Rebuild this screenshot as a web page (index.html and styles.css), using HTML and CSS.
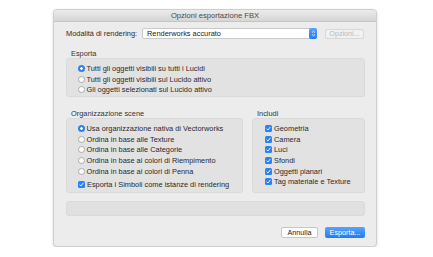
FILE: index.html
```html
<!DOCTYPE html>
<html lang="it">
<head>
  <meta charset="UTF-8" />
  <title>Opzioni esportazione FBX</title>
  <link rel="stylesheet" href="styles.css">
</head>
<body>
  <div class="window">
    <div class="titlebar">Opzioni esportazione FBX</div>
    <div class="content">
      <div class="mode-row">
        <span class="mode-label">Modalità di rendering:</span>
        <div class="popup">
          <span>Renderworks accurato</span>
          <span class="stepper">
            <svg width="5" height="7" viewBox="0 0 5 7"><path d="M1 2.6 L2.5 1.2 L4 2.6 M1 4.4 L2.5 5.8 L4 4.4" fill="none" stroke="#fff" stroke-width="0.8"/></svg>
          </span>
        </div>
        <button class="btn btn-disabled">Opzioni...</button>
      </div>

      <div class="group-title">Esporta</div>
      <div class="box box-export">
        <label class="opt"><span class="radio on"></span>Tutti gli oggetti visibili su tutti i Lucidi</label>
        <label class="opt"><span class="radio"></span>Tutti gli oggetti visibili sul Lucido attivo</label>
        <label class="opt"><span class="radio"></span>Gli oggetti selezionati sul Lucido attivo</label>
      </div>

      <div class="two-cols">
        <div class="col-scene">
          <div class="group-title">Organizzazione scene</div>
          <div class="box box-tall">
            <label class="opt"><span class="radio on"></span>Usa organizzazione nativa di Vectorworks</label>
            <label class="opt"><span class="radio"></span>Ordina in base alle Texture</label>
            <label class="opt"><span class="radio"></span>Ordina in base alle Categorie</label>
            <label class="opt"><span class="radio"></span>Ordina in base ai colori di Riempimento</label>
            <label class="opt"><span class="radio"></span>Ordina in base ai colori di Penna</label>
            <label class="opt opt-gap"><span class="check"></span>Esporta i Simboli come istanze di rendering</label>
          </div>
        </div>
        <div class="col-include">
          <div class="group-title">Includi</div>
          <div class="box box-tall">
            <label class="opt"><span class="check"></span>Geometria</label>
            <label class="opt"><span class="check"></span>Camera</label>
            <label class="opt"><span class="check"></span>Luci</label>
            <label class="opt"><span class="check"></span>Sfondi</label>
            <label class="opt"><span class="check"></span>Oggetti planari</label>
            <label class="opt"><span class="check"></span>Tag materiale e Texture</label>
          </div>
        </div>
      </div>

      <div class="box box-empty"></div>

      <div class="actions">
        <button class="btn">Annulla</button>
        <button class="btn btn-primary">Esporta...</button>
      </div>
    </div>
  </div>
</body>
</html>
```

FILE: styles.css
```css
body {
  margin: 0;
  background: #fff;
  font-family: 'Liberation Sans', Arial, sans-serif;
  font-size: 7.4px;
  color: #2a2a2a;
}
.window {
  margin: 9px 0 0 53px;
  width: 322px;
  height: 236px;
  background: #ececec;
  border: 1px solid #cfcfcf;
  border-radius: 4px;
  box-shadow: 0 1px 3px rgba(0,0,0,0.15);
  overflow: hidden;
}
.titlebar {
  height: 11px;
  line-height: 11px;
  text-align: center;
  font-size: 7.6px;
  color: #4a4a4a;
  background: linear-gradient(#ebebeb, #d6d6d6);
  border-bottom: 1px solid #c4c4c4;
}
.content {
  padding: 6px 11px 0 12px;
}
.mode-row {
  display: flex;
  align-items: center;
  height: 11px;
}
.mode-label {
  width: 76px;
}
.popup {
  width: 175px;
  height: 11px;
  box-sizing: border-box;
  background: #fff;
  border: 1px solid #c9c9c9;
  border-radius: 2px;
  display: flex;
  align-items: center;
  justify-content: space-between;
  padding-left: 4px;
  color: #222;
}
.stepper {
  width: 8px;
  height: 11px;
  margin: -1px -1px -1px 0;
  background: linear-gradient(#5aa3fb, #1f7cf5);
  border-radius: 2px;
  display: flex;
  align-items: center;
  justify-content: center;
}
.btn {
  font-family: inherit;
  font-size: 7.2px;
  height: 10px;
  padding: 0 3px;
  line-height: 8px;
  background: #fff;
  border: 1px solid #c6c6c6;
  border-radius: 2px;
  color: #222;
  box-sizing: border-box;
}
.btn-disabled {
  margin-left: 8px;
  width: 39px;
  color: #b8b8b8;
  background: #f1f1f1;
  border-color: #d8d8d8;
}
.group-title {
  margin: 11px 0 0 5px;
  height: 7px;
  line-height: 7px;
  color: #333;
}
.box {
  background: #e2e2e2;
  border: 1px solid #dadada;
  border-radius: 3px;
  box-sizing: border-box;
}
.box-export {
  margin-top: 1px;
  height: 39px;
  padding: 4px 0 0 11px;
}
.opt {
  display: flex;
  align-items: center;
  height: 10.7px;
  white-space: nowrap;
}
.opt-gap {
  margin-top: 3px;
}
.radio {
  width: 7px;
  height: 7px;
  box-sizing: border-box;
  border-radius: 50%;
  background: #fff;
  border: 0.5px solid #aaa;
  margin-right: 1.5px;
  flex: none;
}
.radio.on {
  border: none;
  background: radial-gradient(circle, #fff 0 1.2px, #2a83f6 1.5px);
}
.check {
  width: 7px;
  height: 7px;
  border-radius: 1.5px;
  margin-right: 2px;
  flex: none;
  background: #2a83f6 url("data:image/svg+xml;utf8,<svg xmlns='http://www.w3.org/2000/svg' viewBox='0 0 7 7'><path d='M1.6 3.7 L2.9 5 L5.4 1.9' fill='none' stroke='white' stroke-width='0.9'/></svg>") no-repeat center/7px 7px;
}
.two-cols {
  display: flex;
  gap: 9px;
}
.two-cols .group-title {
  margin-top: 13px;
}
.col-scene {
  width: 177px;
}
.col-include {
  width: 113px;
}
.box-tall {
  margin-top: 1px;
  height: 75px;
  padding: 4px 0 0 11px;
}
.col-include .box-tall {
  padding-left: 12px;
}
.box-empty {
  margin-top: 8px;
  height: 15px;
  background: #e0e0e0;
}
.actions {
  display: flex;
  justify-content: flex-end;
  gap: 7px;
  margin-top: 11px;
}
.actions .btn {
  height: 11px;
  width: 37px;
}
.actions .btn-primary {
  width: 40px;
  color: #fff;
  border: none;
  background: linear-gradient(#5aa3fb, #1f7cf5);
}
```
